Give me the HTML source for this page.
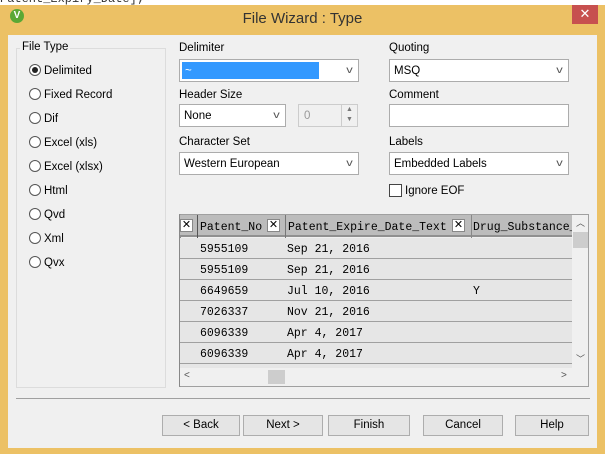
<!DOCTYPE html>
<html><head><style>
*{box-sizing:border-box;margin:0;padding:0}
body{width:611px;height:454px;background:#fff;position:relative;overflow:hidden;font-family:"Liberation Sans",sans-serif;font-size:11.5px;color:#000}
.a{position:absolute}
.frame{left:0;top:5px;width:605px;height:449px;background:#ecc165}
.content{left:8px;top:35px;width:589px;height:413px;background:#f0f0f0}
.lbl{position:absolute;font-size:11.5px}
.combo{position:absolute;background:#fff;border:1px solid #acacac;height:23px;padding:5px 4px;font-size:11.5px}
.combo .ar{position:absolute;right:6px;top:5px;font-size:10px;color:#555;transform:scaleX(1.3)}
.radio{position:absolute;left:29px;font-size:11.5px}
.radio i{display:inline-block;width:12px;height:12px;border:1px solid #555;border-radius:50%;background:#fff;vertical-align:-2px;margin-right:3px;position:relative}
.btn{position:absolute;top:415px;height:21px;border:1px solid #adadad;background:#e5e5e5;text-align:center;line-height:19px;font-size:11.5px}
.mono{font-family:"Liberation Mono",monospace;font-size:11.5px}
.row{position:absolute;left:180px;width:392px;height:21px;border-bottom:1px solid #a0a0a0;background:#e6e6e6}
.row span{position:absolute;top:5px}
.xb{position:absolute;width:13px;height:13px;background:#fff;border:1px solid #888;font-size:11px;line-height:10px;text-align:center;top:4px}
</style></head><body>
<div class="a mono" style="left:0;top:-8px;font-size:12px;color:#333">Patent_Expiry_Date];</div>
<div class="a frame"></div>
<div class="a" style="left:10px;top:9px;width:14px;height:14px;border-radius:50%;background:#5aa835;color:#fff;font-size:10px;font-weight:bold;text-align:center;line-height:14px">V</div>
<div class="a" style="left:0;top:10px;width:605px;text-align:center;font-size:15px;color:#333">File Wizard : Type</div>
<div class="a" style="left:572px;top:5px;width:26px;height:19px;background:#c7504f;color:#fff;text-align:center;font-size:13px;line-height:18px">✕</div>
<div class="a content"></div>
<div class="a" style="left:16px;top:48px;width:150px;height:340px;border:1px solid #dcdcdc"></div>
<div class="lbl" style="left:20px;top:41px;background:#f0f0f0;padding:0 2px 0 2px">File Type</div>
<div class="radio" style="top:64px"><i><b style="position:absolute;left:2px;top:2px;width:6px;height:6px;border-radius:50%;background:#222"></b></i>Delimited</div>
<div class="radio" style="top:88px"><i></i>Fixed Record</div>
<div class="radio" style="top:112px"><i></i>Dif</div>
<div class="radio" style="top:136px"><i></i>Excel (xls)</div>
<div class="radio" style="top:160px"><i></i>Excel (xlsx)</div>
<div class="radio" style="top:184px"><i></i>Html</div>
<div class="radio" style="top:208px"><i></i>Qvd</div>
<div class="radio" style="top:232px"><i></i>Xml</div>
<div class="radio" style="top:256px"><i></i>Qvx</div>

<div class="lbl" style="left:179px;top:42px">Delimiter</div>
<div class="combo" style="left:179px;top:59px;width:180px"><div style="position:absolute;left:2px;top:2px;width:137px;height:17px;background:#3399ff;color:#fff;padding:3px 0 0 3px">~</div><span class="ar">v</span></div>
<div class="lbl" style="left:389px;top:42px">Quoting</div>
<div class="combo" style="left:389px;top:59px;width:180px">MSQ<span class="ar">v</span></div>
<div class="lbl" style="left:179px;top:89px">Header Size</div>
<div class="combo" style="left:179px;top:104px;width:107px">None<span class="ar">v</span></div>
<div class="a" style="left:298px;top:104px;width:60px;height:23px;border:1px solid #ccc;background:#f0f0f0;color:#999;padding:5px 5px">0</div>
<div class="a" style="left:341px;top:105px;width:16px;height:21px;border-left:1px solid #ccc;font-size:7px;color:#777;text-align:center;line-height:10px">▲<br>▼</div>
<div class="lbl" style="left:389px;top:89px">Comment</div>
<div class="a" style="left:389px;top:104px;width:180px;height:23px;background:#fff;border:1px solid #acacac"></div>
<div class="lbl" style="left:179px;top:136px">Character Set</div>
<div class="combo" style="left:179px;top:152px;width:180px">Western European<span class="ar">v</span></div>
<div class="lbl" style="left:389px;top:136px">Labels</div>
<div class="combo" style="left:389px;top:152px;width:180px">Embedded Labels<span class="ar">v</span></div>
<div class="a" style="left:389px;top:184px;width:13px;height:13px;border:1px solid #444;background:#fff"></div>
<div class="lbl" style="left:405px;top:185px">Ignore EOF</div>

<div class="a" style="left:179px;top:214px;width:410px;height:173px;border:1px solid #a0a0a0;border-left:2px solid #888;background:#f0f0f0"></div>
<div class="a" style="left:180px;top:215px;width:392px;height:22px;background:#bcbcbc;border-bottom:2px solid #909090"></div>
<div class="xb" style="left:180px;top:219px">✕</div>
<div class="a" style="left:197px;top:215px;width:1px;height:150px;background:#555"></div>
<div class="a mono" style="left:200px;top:221px">Patent_No</div>
<div class="xb" style="left:267px;top:219px">✕</div>
<div class="a" style="left:285px;top:215px;width:1px;height:150px;background:#777"></div>
<div class="a mono" style="left:288px;top:221px">Patent_Expire_Date_Text</div>
<div class="xb" style="left:452px;top:219px">✕</div>
<div class="a" style="left:471px;top:215px;width:1px;height:150px;background:#888"></div>
<div class="a mono" style="left:473px;top:221px;width:99px;overflow:hidden;white-space:nowrap">Drug_Substance_Flag</div>
<div class="row mono" style="top:238px"><span style="left:20px">5955109</span><span style="left:107px">Sep 21, 2016</span></div>
<div class="row mono" style="top:259px"><span style="left:20px">5955109</span><span style="left:107px">Sep 21, 2016</span></div>
<div class="row mono" style="top:280px"><span style="left:20px">6649659</span><span style="left:107px">Jul 10, 2016</span><span style="left:293px">Y</span></div>
<div class="row mono" style="top:301px"><span style="left:20px">7026337</span><span style="left:107px">Nov 21, 2016</span></div>
<div class="row mono" style="top:322px"><span style="left:20px">6096339</span><span style="left:107px">Apr 4, 2017</span></div>
<div class="row mono" style="top:343px"><span style="left:20px">6096339</span><span style="left:107px">Apr 4, 2017</span></div>
<div class="row" style="top:364px;height:4px;border:0"></div>
<div class="a" style="left:180px;top:368px;width:392px;height:18px;background:#f0f0f0"></div>
<div class="a" style="left:268px;top:370px;width:17px;height:14px;background:#cdcdcd"></div>
<div class="a" style="left:184px;top:370px;font-size:10px;color:#555">&lt;</div>
<div class="a" style="left:561px;top:370px;font-size:10px;color:#555">&gt;</div>
<div class="a" style="left:572px;top:215px;width:16px;height:153px;background:#f0f0f0"></div>
<div class="a" style="left:573px;top:232px;width:15px;height:16px;background:#cdcdcd"></div>
<div class="a" style="left:576px;top:216px;font-size:9px;color:#555">︿</div>
<div class="a" style="left:576px;top:352px;font-size:9px;color:#555">﹀</div>

<div class="a" style="left:16px;top:398px;width:574px;height:1px;background:#a0a0a0"></div>
<div class="btn" style="left:162px;width:78px">&lt; Back</div>
<div class="btn" style="left:243px;width:80px">Next &gt;</div>
<div class="btn" style="left:328px;width:82px">Finish</div>
<div class="btn" style="left:423px;width:80px">Cancel</div>
<div class="btn" style="left:515px;width:74px">Help</div>
</body></html>
